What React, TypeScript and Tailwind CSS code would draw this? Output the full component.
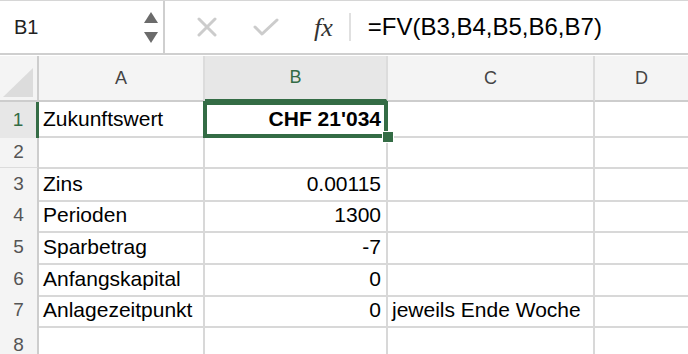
import React from "react";

const font = { fontFamily: '"Liberation Sans", Arial, sans-serif' };

type Row = { n: number; a?: string; b?: string; c?: string; h: string };

const rows: Row[] = [
  { n: 1, a: "Zukunftswert", b: "CHF 21'034", h: "h-[36px]" },
  { n: 2, h: "h-[30px]" },
  { n: 3, a: "Zins", b: "0.00115", h: "h-[31px]" },
  { n: 4, a: "Perioden", b: "1300", h: "h-[32px]" },
  { n: 5, a: "Sparbetrag", b: "-7", h: "h-[32px]" },
  { n: 6, a: "Anfangskapital", b: "0", h: "h-[31px]" },
  { n: 7, a: "Anlagezeitpunkt", b: "0", c: "jeweils Ende Woche", h: "h-[32px]" },
  { n: 8, h: "h-[40px]" },
];

function Toolbar() {
  return (
    <div className="flex h-[55px] border-t border-[#d6d6d6] border-b-2 border-b-[#cfcfcf] bg-white">
      <div className="flex w-[163px] items-center justify-between pl-[14px] pr-[4px]">
        <span className="text-[20px] text-[#222]">B1</span>
        <div className="flex flex-col gap-[9px] pr-[1px]">
          <svg width="14" height="11" viewBox="0 0 14 11">
            <path d="M7 0 L14 11 L0 11 Z" fill="#6b6b6b" />
          </svg>
          <svg width="14" height="11" viewBox="0 0 14 11">
            <path d="M0 0 L14 0 L7 11 Z" fill="#6b6b6b" />
          </svg>
        </div>
      </div>
      <div className="w-[2px] bg-[#cfcfcf]" />
      <div className="flex flex-1 items-center">
        <div className="ml-[32px] flex w-[20px] justify-center">
          <svg width="20" height="20" viewBox="0 0 20 20">
            <path d="M2 2 L18 18 M18 2 L2 18" stroke="#cccccc" strokeWidth="3" strokeLinecap="round" />
          </svg>
        </div>
        <div className="ml-[36px] flex w-[26px] justify-center">
          <svg width="26" height="20" viewBox="0 0 26 20">
            <path d="M2 10 L9 17 L24 3" stroke="#cccccc" strokeWidth="3" fill="none" strokeLinecap="round" strokeLinejoin="round" />
          </svg>
        </div>
        <span
          className="ml-[35px] text-[26px] italic text-[#333]"
          style={{ fontFamily: '"Liberation Serif", "Times New Roman", serif' }}
        >
          fx
        </span>
        <div className="ml-[16px] h-[28px] w-[2px] bg-[#e0e0e0]" />
        <span className="ml-[17px] text-[24px] text-black">=FV(B3,B4,B5,B6,B7)</span>
      </div>
    </div>
  );
}

const cols = "grid grid-cols-[39px_166px_183px_207px_1fr]";

export default function App() {
  return (
    <div className="h-[354px] w-[688px] overflow-hidden bg-white" style={font}>
      <Toolbar />
      <div className="mt-[1px]">
        <div className={`${cols} h-[46px] bg-[#f4f4f4] text-[18px] text-[#444]`}>
          <div className="flex items-end justify-end border-r-2 border-b-2 border-[#cdcdcd] pb-[3px] pr-[4px]">
            <svg width="30" height="29" viewBox="0 0 30 29">
              <path d="M30 0 L30 29 L0 29 Z" fill="#dcdcdc" />
            </svg>
          </div>
          <div className="flex items-center justify-center border-r-2 border-b-2 border-[#dcdcdc] border-b-[#cdcdcd]">A</div>
          <div className="flex items-center justify-center border-b-[3px] border-r-2 border-r-[#dcdcdc] border-b-[#346c45] bg-[#e7e7e7] text-[#346c45]">
            B
          </div>
          <div className="flex items-center justify-center border-r-2 border-b-2 border-[#dcdcdc] border-b-[#cdcdcd]">C</div>
          <div className="flex items-center justify-center border-b-2 border-[#cdcdcd]">D</div>
        </div>
        {rows.map((r) => (
          <div key={r.n} className={`${cols} ${r.h} relative text-[21px] text-black ${r.n === 1 ? "z-10" : ""}`}>
            <div
              className={
                r.n === 1
                  ? "flex items-center justify-center border-r-[3px] border-r-[#346c45] bg-[#e7e7e7] text-[19px] text-[#346c45]"
                  : "flex items-center justify-center border-r-2 border-b-2 border-[#dcdcdc] border-r-[#cdcdcd] bg-[#f4f4f4] text-[19px] text-[#555]"
              }
            >
              {r.n}
            </div>
            <div className="flex items-center border-r-2 border-b-2 border-[#d8d8d8] pl-[4px]">{r.a}</div>
            <div className="relative flex items-center justify-end border-r-2 border-b-2 border-[#d8d8d8] pr-[5px]">
              {r.n === 1 ? (
                <>
                  <span className="font-bold">{r.b}</span>
                  <div className="pointer-events-none absolute -left-[2px] -top-[1px] -right-[2px] -bottom-[2px] border-[4px] border-[#346c45]" />
                  <div className="absolute -right-[8px] -bottom-[7px] h-[12px] w-[12px] border border-white bg-[#346c45]" />
                </>
              ) : (
                r.b
              )}
            </div>
            <div className="flex items-center border-r-2 border-b-2 border-[#d8d8d8] pl-[4px]">{r.c}</div>
            <div className="border-b-2 border-[#d8d8d8]" />
          </div>
        ))}
      </div>
    </div>
  );
}
